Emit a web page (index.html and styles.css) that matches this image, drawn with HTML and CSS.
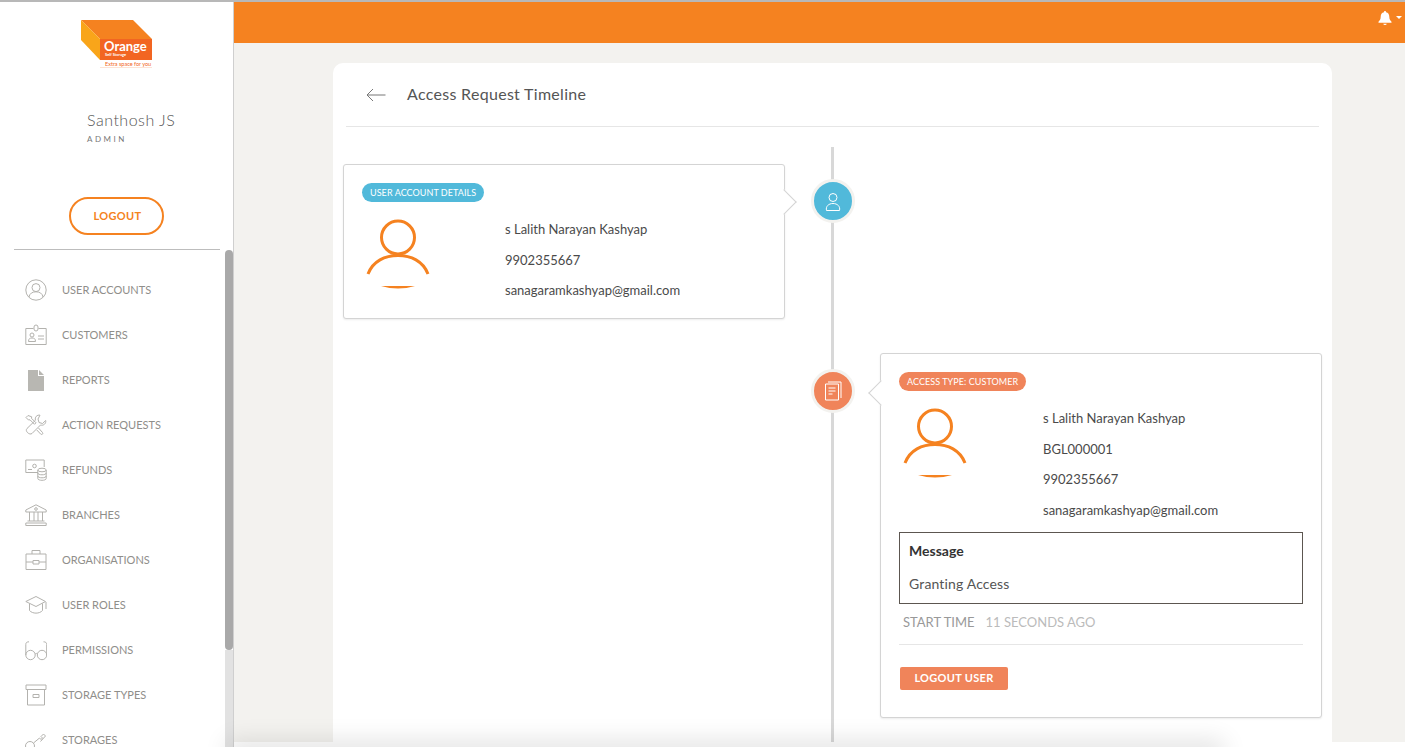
FILE: index.html
```html
<!DOCTYPE html>
<html>
<head>
    <meta charset="utf-8">
    <title>Access Request Timeline</title>
    <link rel="stylesheet" href="styles.css">
</head>
<body>
    <aside class="sidebar">
        <div class="side-content">
            <svg class="logo" width="75" height="52" viewBox="0 0 75 52">
                <polygon points="0,0 52,0 71,19 19,19" fill="#f58220"/>
                <polygon points="0,0 19,19 19,40 0,20" fill="#f9a51a"/>
                <rect x="19" y="19" width="52" height="21" fill="#f26522"/>
                <text x="23" y="31" class="logo-name">Orange</text>
                <text x="24" y="36" class="logo-sub">Self Storage</text>
                <text x="24" y="45.5" class="logo-tag">Extra space for you</text>
                <rect x="19" y="47" width="52" height="1" fill="#fde3d5"/>
            </svg>
            <div class="user-name">Santhosh JS</div>
            <div class="user-role">ADMIN</div>
            <a class="logout-btn">LOGOUT</a>
            <hr class="side-rule">
            <ul class="menu">
                <li>
                    <svg viewBox="0 0 22 22" class="menu-icon"><circle cx="11" cy="11" r="10.2"/><circle cx="11" cy="8.6" r="4"/><path d="M4 18c.6-3.6 3.4-5.2 7-5.2s6.400 1.600 7 5.200"/></svg>
                    <span>USER ACCOUNTS</span>
                </li>
                <li>
                    <svg viewBox="0 0 22 22" class="menu-icon"><path d="M8.500 4.500H.8v16h20.400v-16h-7.700"/><rect x="9" y="1" width="4" height="6" rx="2"/><circle cx="7" cy="11" r="2"/><path d="M3.500 17.500c0-3 1.500-3.500 3.500-3.500s3.500.5 3.500 3.500zM13 12h6M13 15h6"/></svg>
                    <span>CUSTOMERS</span>
                </li>
                <li>
                    <svg viewBox="0 0 22 22" class="menu-icon solid"><path d="M3 1h10v6h6v14.500a.5.5 0 0 1-.5.5h-15a.5.5 0 0 1-.5-.5zM14 1l5 5h-5z"/></svg>
                    <span>REPORTS</span>
                </li>
                <li>
                    <svg viewBox="0 0 22 22" class="menu-icon"><path d="M3 1.500l-2 2 2.500 2.500 1.500-.2 4.500 4.500 1.500-1.500-4.500-4.500.2-1.500zM15 1.200c-3-.6-5.500 2-4.500 5L2 14.500c-2.500 2.500 2.500 7 5 5l8.500-8.500c3 1 5.800-1.500 5.200-4.500l-3.200 3-3.500-1-1-3.500z"/><path d="M13.500 14l4 4.500c1 1.300-.5 2.500-1.700 1.700l-4-4.200"/></svg>
                    <span>ACTION REQUESTS</span>
                </li>
                <li>
                    <svg viewBox="0 0 22 22" class="menu-icon"><path d="M13 13.500H.8V1h18.400v7"/><circle cx="9.500" cy="7" r="1.800"/><path d="M3 10.500h4"/><ellipse cx="17" cy="11" rx="4.200" ry="1.800"/><path d="M12.800 11v8.500c0 2.400 8.400 2.400 8.400 0V11M12.800 14c0 2.400 8.400 2.400 8.400 0M12.800 17c0 2.400 8.400 2.400 8.400 0"/></svg>
                    <span>REFUNDS</span>
                </li>
                <li>
                    <svg viewBox="0 0 22 22" class="menu-icon"><path d="M11 .8L.8 6v2h20.400V6zM4.500 8v9M9 8v9M13 8v9M17.500 8v9M2.500 17h17M.8 19h20.400v2.500H.8z"/><circle cx="11" cy="5" r="1.300"/></svg>
                    <span>BRANCHES</span>
                </li>
                <li>
                    <svg viewBox="0 0 22 22" class="menu-icon"><path d="M1 5h20v15.500H1zM7 5V1.500h8V5M1 13h7M14 13h7M8 11.500h6v3.500H8z"/></svg>
                    <span>ORGANISATIONS</span>
                </li>
                <li>
                    <svg viewBox="0 0 22 22" class="menu-icon"><path d="M11 2.500L.8 7.500 11 12.500l9.500-5zM4.500 9.500v7c3 3.500 10 3.500 13 0v-7M21 8v7"/></svg>
                    <span>USER ROLES</span>
                </li>
                <li>
                    <svg viewBox="0 0 22 22" class="menu-icon"><circle cx="5.500" cy="16" r="4.700"/><circle cx="17" cy="16" r="4.700"/><path d="M10.200 15c.8-.7 1.400-.7 2.100 0M.8 16V5.500C.8 3.500 2 2.800 4 2.800M21.700 16V5.500c0-2-1.200-2.700-3.200-2.700"/></svg>
                    <span>PERMISSIONS</span>
                </li>
                <li>
                    <svg viewBox="0 0 22 22" class="menu-icon"><path d="M1 1h20v4.500H1zM2.500 5.500v15.500h17V5.500M8 10.500h6v3H8z"/></svg>
                    <span>STORAGE TYPES</span>
                </li>
                <li>
                    <svg viewBox="0 0 22 22" class="menu-icon"><circle cx="5" cy="17" r="4.500"/><path d="M8.500 14l6-5 1.500 1.500 1.500-1.500-1.500-1.500 2.500-2.500 2 2-5 5.500"/></svg>
                    <span>STORAGES</span>
                </li>
            </ul>
        </div>
        <div class="side-track">
            <div class="side-thumb"></div>
            <div class="side-rest"></div>
        </div>
    </aside>
    <div class="main">
        <header class="topbar">
            <svg class="bell" width="14" height="14" viewBox="0 0 14 14"><path d="M7 0a1 1 0 0 1 1 1.200c2.300.5 3.300 2.200 3.300 4.500 0 2.500 1 3.800 2.200 5v1H.5v-1c1.200-1.200 2.200-2.500 2.200-5C2.700 3.400 3.700 1.700 6 1.200A1 1 0 0 1 7 0zM5.300 12.800h3.400a1.700 1.200 0 0 1-3.400 0z" fill="#fff"/></svg>
            <span class="caret"></span>
        </header>
        <div class="content">
            <section class="card">
                <div class="card-head">
                    <svg class="back" width="20" height="14" viewBox="0 0 20 14"><path d="M19.500 7H1M7 1L1 7l6 6" fill="none" stroke="#777" stroke-width="1"/></svg>
                    <h2>Access Request Timeline</h2>
                </div>
                <div class="timeline">
                    <div class="panel panel-left">
                        <span class="chip chip-blue">USER ACCOUNT DETAILS</span>
                        <div class="panel-body">
                            <svg class="avatar" width="64" height="74" viewBox="0 0 64 74"><circle cx="32" cy="19.500" r="16.500" fill="none" stroke="#f58220" stroke-width="3"/><path d="M2 56C7 43 19 37.500 32 37.500S57 43 62 56" fill="none" stroke="#f58220" stroke-width="3"/><path d="M15 68h34q-17 5-34 0z" fill="#f58220"/></svg>
                            <div class="info">
                                <p>s Lalith Narayan Kashyap</p>
                                <p>9902355667</p>
                                <p>sanagaramkashyap@gmail.com</p>
                            </div>
                        </div>
                    </div>
                    <div class="node node-blue">
                        <svg width="20" height="20" viewBox="0 0 20 20" fill="none" stroke="#fff" stroke-width="1"><circle cx="10" cy="6.500" r="4"/><path d="M3.500 19.500c-1-4 2-7 6.500-7s7.500 3 6.500 7z"/></svg>
                    </div>
                    <div class="node node-orange">
                        <svg width="20" height="20" viewBox="0 0 20 20" fill="none" stroke="#fff" stroke-width="1"><path d="M5 1h13v16M2.500 3h13v16h-13zM5.500 7h7M5.500 10h7M5.500 13h4"/></svg>
                    </div>
                    <div class="panel panel-right">
                        <span class="chip chip-orange">ACCESS TYPE: CUSTOMER</span>
                        <div class="panel-body">
                            <svg class="avatar" width="64" height="74" viewBox="0 0 64 74"><circle cx="32" cy="19.500" r="16.500" fill="none" stroke="#f58220" stroke-width="3"/><path d="M2 56C7 43 19 37.500 32 37.500S57 43 62 56" fill="none" stroke="#f58220" stroke-width="3"/><path d="M15 68h34q-17 5-34 0z" fill="#f58220"/></svg>
                            <div class="info">
                                <p>s Lalith Narayan Kashyap</p>
                                <p>BGL000001</p>
                                <p>9902355667</p>
                                <p>sanagaramkashyap@gmail.com</p>
                            </div>
                        </div>
                        <div class="message">
                            <h4>Message</h4>
                            <p>Granting Access</p>
                        </div>
                        <div class="times"><span class="time-label">START TIME</span><span class="time-value">11 SECONDS AGO</span></div>
                        <hr class="panel-rule">
                        <a class="action-btn">LOGOUT USER</a>
                    </div>
                </div>
            </section>
        </div>
    </div>
    <div class="bottom-shade"></div>
</body>
</html>
```

FILE: styles.css
```css
html, body {
    height: 100%;
    margin: 0;
    overflow: hidden;
}

body {
    display: flex;
    font-family: Lato, Arial, sans-serif;
    background-color: white;
    border-top: 2px solid #b8b8b8;
    box-sizing: border-box;
    color: #444;
}

/* sidebar */
.sidebar {
    width: 233px;
    flex-shrink: 0;
    display: flex;
    background-color: white;
    border-right: 1px solid #cfcfcf;
    overflow: hidden;
}

.side-content {
    width: 225px;
    flex-shrink: 0;
}

.side-track {
    display: flex;
    flex-direction: column;
    width: 8px;
    flex-shrink: 0;
}

.side-thumb {
    height: 400px;
    margin-top: 248px;
    background-color: #a9a9a9;
    border-radius: 4px;
}

.side-rest {
    flex: 1;
    background-color: #e2e2e2;
}

.logo {
    display: block;
    margin: 18px 0 0 81px;
}

.logo-name {
    font-size: 13px;
    font-weight: 700;
    fill: white;
}

.logo-sub {
    font-size: 4px;
    font-weight: 700;
    fill: white;
}

.logo-tag {
    font-size: 5.500px;
    fill: #f26522;
}

.user-name {
    margin: 38px 0 0 87px;
    font-size: 16px;
    font-weight: 300;
    line-height: 20px;
    letter-spacing: 0.5px;
    color: #555;
}

.user-role {
    margin: 3px 0 0 87px;
    font-size: 8px;
    line-height: 12px;
    letter-spacing: 2.500px;
    color: #777;
}

.logout-btn {
    display: block;
    width: 91px;
    height: 34px;
    margin: 52px 0 0 69px;
    border: 2px solid #f58220;
    border-radius: 19px;
    font-size: 11px;
    font-weight: 700;
    line-height: 34px;
    letter-spacing: 0.3px;
    text-indent: 2px;
    text-align: center;
    color: #f58220;
}

.side-rule {
    width: 206px;
    margin: 14px 0 0 14px;
    border: 0;
    border-top: 1px solid #bdbdbd;
}

.menu {
    list-style: none;
    margin: 17px 0 0;
    padding: 0 0 0 25px;
}

.menu li {
    display: flex;
    align-items: center;
    gap: 15px;
    height: 45px;
    font-size: 11px;
    color: #8f8e8a;
}

.menu-icon {
    width: 22px;
    height: 22px;
    flex-shrink: 0;
    fill: none;
    stroke: #b3b2ae;
    stroke-width: 1;
}

.menu-icon.solid {
    fill: #b8b7b2;
    stroke: none;
}

/* main column */
.main {
    flex: 1;
    min-width: 0;
    height: 740px;
    overflow: hidden;
    background-color: #f3f2ef;
}

.topbar {
    display: flex;
    align-items: center;
    justify-content: flex-end;
    gap: 4px;
    height: 41px;
    padding: 0 3px 10px 0;
    box-sizing: border-box;
    background-color: #f58220;
}

.caret {
    border-top: 3px solid white;
    border-left: 3px solid transparent;
    border-right: 3px solid transparent;
}

.content {
    padding: 20px 73px 0 99px;
}

.card {
    background-color: white;
    border-radius: 10px;
    padding: 0 10px 40px;
}

.card-head {
    display: flex;
    align-items: center;
    gap: 21px;
    height: 61px;
    margin: 0 3px;
    padding: 0 0 2px 20px;
    border-bottom: 1px solid #e6e6e6;
}

.back {
    margin-top: 2px;
}

.card-head h2 {
    margin: 0;
    font-size: 16px;
    font-weight: 400;
    letter-spacing: 0.3px;
    color: #555;
}

/* timeline */
.timeline {
    position: relative;
    display: grid;
    grid-template-columns: 442px 1fr 442px;
    grid-template-rows: 189px auto;
    padding-top: 37px;
}

.timeline::before {
    content: "";
    position: absolute;
    top: 20px;
    left: 488px;
    width: 3px;
    height: 600px;
    background-color: #d8d8d8;
}

.panel {
    position: relative;
    background-color: white;
    border: 1px solid #d4d4d4;
    border-radius: 3px;
    box-shadow: 0 1px 2px rgba(0, 0, 0, 0.08);
    box-sizing: border-box;
    padding: 18px 18px 0;
}

.panel::after {
    content: "";
    position: absolute;
    width: 17px;
    height: 17px;
    background-color: white;
    border: 1px solid #d4d4d4;
    border-width: 1px 1px 0 0;
    transform: rotate(45deg);
}

.panel-left {
    height: 155px;
}

.panel-left::after {
    top: 28px;
    right: -9px;
}

.panel-right {
    height: 365px;
    grid-column: 3;
    grid-row: 2;
}

.panel-right::after {
    top: 30px;
    left: -9px;
    transform: rotate(225deg);
}

.chip {
    display: block;
    width: fit-content;
    height: 19px;
    padding: 0 8px;
    border-radius: 10px;
    font-size: 9px;
    line-height: 19px;
    letter-spacing: 0.06px;
    color: white;
}

.chip-blue {
    background-color: #51b9da;
}

.chip-orange {
    background-color: #f0845a;
}

.panel-body {
    display: flex;
    margin-left: 4px;
}

.avatar {
    flex-shrink: 0;
    margin: 16px 75px 0 0;
}

.info {
    margin-top: 12px;
}

.panel-right .info {
    margin-left: 1px;
}

.info p {
    margin: 0;
    font-size: 13px;
    line-height: 30.700px;
    color: #4a4a4a;
}

.node {
    position: relative;
    display: flex;
    align-items: center;
    justify-content: center;
    width: 38px;
    height: 38px;
    border: 3px solid #f3f2ef;
    border-radius: 50%;
    justify-self: center;
}

.node-blue {
    grid-column: 2;
    grid-row: 1;
    margin-top: 15px;
    background-color: #51b9da;
}

.node-orange {
    grid-column: 2;
    grid-row: 2;
    margin-top: 16px;
    background-color: #f0845a;
}

.message {
    height: 72px;
    margin-top: 6px;
    padding: 0 9px;
    border: 1px solid #5c5650;
    box-sizing: border-box;
}

.message h4 {
    margin: 8px 0 0;
    font-size: 14px;
    font-weight: 700;
    line-height: 20px;
    color: #333;
}

.message p {
    margin: 13px 0 0;
    font-size: 14px;
    line-height: 20px;
    letter-spacing: 0.15px;
    color: #555;
}

.times {
    display: flex;
    gap: 11px;
    margin: 8px 0 0 4px;
    font-size: 13px;
    line-height: 20px;
}

.time-label {
    color: #999;
}

.time-value {
    color: #bbb;
}

.panel-rule {
    margin: 12px 0 0;
    border: 0;
    border-top: 1px solid #e6e6e6;
}

.action-btn {
    display: block;
    width: 108px;
    height: 23px;
    margin: 22px 0 0 1px;
    border-radius: 2px;
    background-color: #f0845a;
    font-size: 11px;
    font-weight: 700;
    line-height: 22px;
    letter-spacing: 0.3px;
    text-align: center;
    color: white;
}

/* soft shadow that sits over the bottom edge */
.bottom-shade {
    position: fixed;
    left: 233px;
    bottom: -10px;
    width: 985px;
    height: 10px;
    box-shadow: 0 0 24px 6px rgba(0, 0, 0, 0.12);
}
```
